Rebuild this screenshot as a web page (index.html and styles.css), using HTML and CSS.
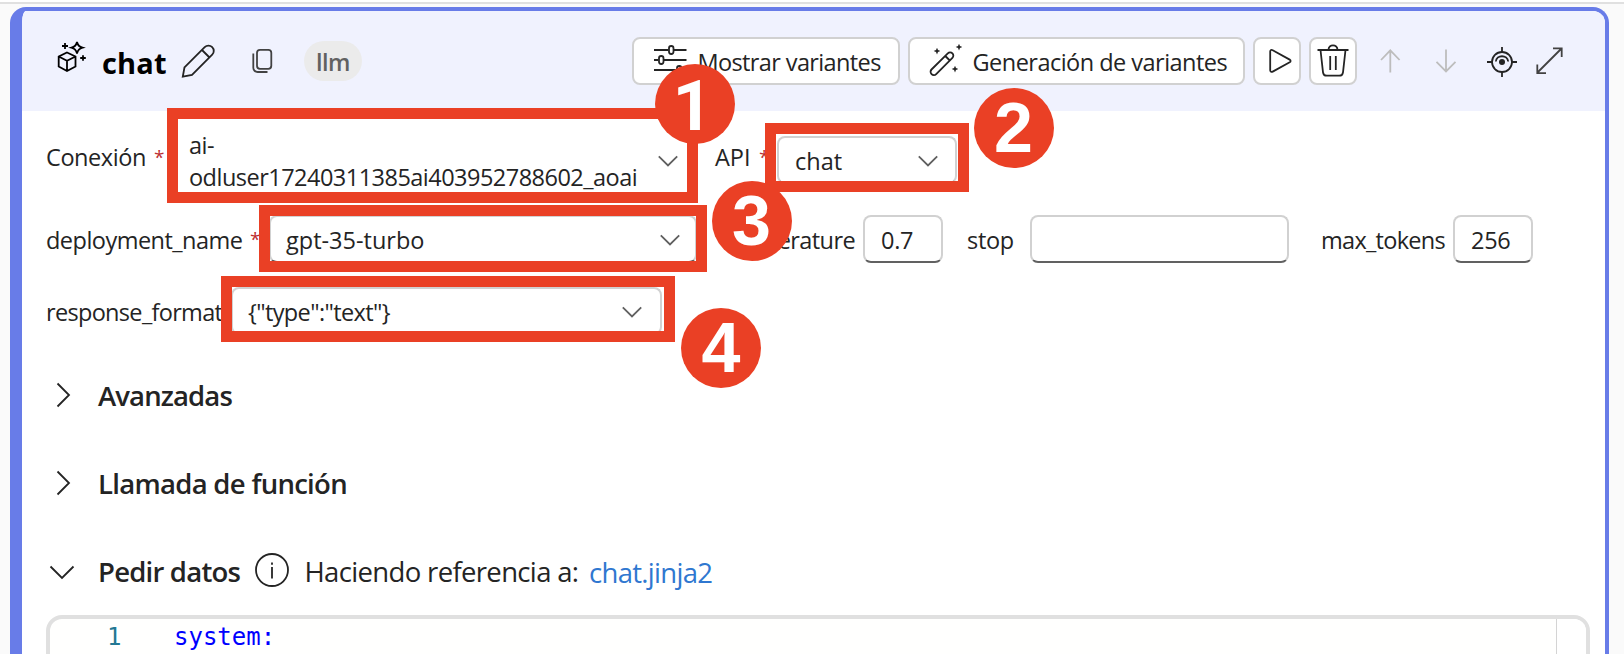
FILE: index.html
```html
<!DOCTYPE html>
<html lang="es">
<head>
<meta charset="utf-8">
<title>chat</title>
<link rel="stylesheet" href="styles.css">
</head>
<body>
<main class="card">
  <header class="head">
    <svg class="ic cube" width="32" height="34" viewBox="56 40 32 34"><path d="M67 52.500l8.500 4v10l-8.500 4.500-8.300-4.500v-10zM58.700 56.500l8.300 4.200 8.500-4.200M67 60.700V71"/><path d="M77 42c.8 3.500 2 4.800 5.500 5.700-3.500 1-4.700 2.300-5.500 5.800-.8-3.500-2-4.800-5.500-5.800 3.500-.9 4.700-2.200 5.500-5.700z"/><path d="M65 43v6M62 46h6M83 55.200v5.600M80.200 58h5.600"/></svg>
    <h1 class="name">chat</h1>
    <svg class="ic pencil" width="36" height="36" viewBox="180 43 36 36"><path d="M184.500 67.300L204.700 47.200a5.300 5.300 0 0 1 7.500 7.500L192 74.800 182.800 76.600zM202 50l7.500 7.500"/></svg>
    <svg class="ic copy" width="24" height="28" viewBox="250 47 24 28"><rect x="257" y="49.800" width="14.300" height="19" rx="3"/><path d="M253.300 53.500v14.200a4.300 4.300 0 0 0 4.300 4.300h9.900"/></svg>
    <span class="pill">llm</span>
    <div class="tools">
      <button class="btn show"><svg class="ic" width="34" height="34" viewBox="653 44 34 34"><path d="M654 50h14.500M674 50h12.500M654 60h4.500M664 60h22.500M654 70h22.500M682 70h4.500"/><rect x="669" y="46" width="4.500" height="8" rx="2.200"/><rect x="659" y="56" width="4.500" height="8" rx="2.200"/><rect x="677" y="66" width="4.500" height="8" rx="2.200"/></svg><span class="txt">Mostrar variantes</span></button>
      <button class="btn gen"><svg class="ic" width="36" height="36" viewBox="928 44 36 36"><path d="M931.500 70.500L947.800 54.300a3.100 3.100 0 0 1 4.600 4.600L936.200 75.100a3.200 3.200 0 0 1-4.700-4.600zM945.300 57l4.500 4.500"/><path class="star" d="M937 48.700l1 2.300 2.400 1-2.400 1-1 2.400-1-2.400-2.400-1 2.400-1zM959 44.700l1 2.300 2.400 1-2.400 1-1 2.400-1-2.400-2.400-1 2.400-1zM955 66.800l1 2.200 2.400 1-2.400 1-1 2.400-1-2.400-2.400-1 2.400-1z"/></svg><span class="txt">Generación de variantes</span></button>
      <button class="btn sq"><svg class="ic" width="44" height="44" viewBox="1255.500 39 44 44"><path d="M1270.700 51.500c0-1.500 1.200-2 2.500-1.300l17 9.400c1.200.7 1.200 1.900 0 2.600l-17 9.400c-1.300.7-2.500.1-2.500-1.300z"/></svg></button>
      <button class="btn sq"><svg class="ic" width="44" height="44" viewBox="1311.500 39 44 44"><path d="M1318 50h31M1329 50c0-6.300 9-6.300 9 0M1321 50l2.500 22.300c.3 2.200 1.600 3.400 3.700 3.400h12.600c2.100 0 3.400-1.200 3.700-3.400L1346 50M1330.700 56v14M1336.300 56v14"/></svg></button>
      <svg class="ic dim up" width="32" height="32" viewBox="1373 45 32 32"><path d="M1389.300 72.500V50M1380 60l9.300-9.700 9.300 9.700"/></svg>
      <svg class="ic dim down" width="32" height="32" viewBox="1429 45 32 32"><path d="M1445 49.500V72M1435.500 61.800l9.500 9.700 9.500-9.700"/></svg>
      <svg class="ic target" width="32" height="32" viewBox="1485 45 32 32"><circle cx="1501" cy="62" r="10"/><circle cx="1501" cy="62" r="3" class="dot"/><path d="M1501 47v5.500M1501 71.500V77M1486 62h5.500M1510.500 62h5.500M1494.800 61.500c.8-7 11.600-7 12.400 0"/></svg>
      <svg class="ic expand" width="32" height="32" viewBox="1533 45 32 32"><path d="M1536.500 72.500l24-24M1552 48.300h8.700v8.700M1536.300 64.500v8.700h8.700"/></svg>
    </div>
  </header>

  <section class="row r1">
    <label class="lbl connection">Conexión</label><span class="req">*</span>
    <div class="select conn"><span class="two">ai-<br>odluser17240311385ai403952788602_aoai</span><svg class="ic chev" width="20" height="12" viewBox="0 0 20 12"><path d="M.8 1.300l9.200 9.200 9.200-9.200"/></svg></div>
    <label class="lbl api">API</label><span class="req short">*</span>
    <div class="select kind"><span>chat</span><svg class="ic chev" width="20" height="12" viewBox="0 0 20 12"><path d="M.8 1.300l9.200 9.200 9.200-9.200"/></svg></div>
  </section>

  <section class="row r2">
    <label class="lbl deployment">deployment_name</label><span class="req">*</span>
    <div class="select model"><span>gpt-35-turbo</span><svg class="ic chev" width="20" height="12" viewBox="0 0 20 12"><path d="M.8 1.300l9.200 9.200 9.200-9.200"/></svg></div>
    <label class="lbl temp">temperature</label>
    <div class="input num">0.7</div>
    <label class="lbl stop">stop</label>
    <div class="input wide"></div>
    <label class="lbl max">max_tokens</label>
    <div class="input num">256</div>
  </section>

  <section class="row r3">
    <label class="lbl response">response_format</label>
    <div class="select format"><span class="txt">{"type":"text"}</span><svg class="ic chev" width="20" height="12" viewBox="0 0 20 12"><path d="M.8 1.300l9.200 9.200 9.200-9.200"/></svg></div>
  </section>

  <section class="fold first"><svg class="ic" width="26" height="26" viewBox="0 0 26 26"><path d="M8.500 1.500L20 13 8.500 24.500"/></svg><h2>Avanzadas</h2></section>
  <section class="fold"><svg class="ic" width="26" height="26" viewBox="0 0 26 26"><path d="M8.500 1.500L20 13 8.500 24.500"/></svg><h2>Llamada de función</h2></section>
  <section class="fold"><svg class="ic" width="26" height="26" viewBox="0 0 26 26"><path d="M1.500 8.500L13 20 24.500 8.500"/></svg><h2 class="ask">Pedir datos</h2>
    <svg class="ic info" width="36" height="36" viewBox="0 0 36 36"><circle cx="18" cy="17" r="16"/><path d="M18 14v11.500M18 9.500v2.300"/></svg>
    <span class="refers">Haciendo referencia a:</span><a class="link">chat.jinja2</a></section>

  <section class="editor"><span class="ln">1</span><code>system:</code><span class="ruler"></span></section>
</main>

<div class="mark m1"></div><div class="mark m2"></div><div class="mark m3"></div><div class="mark m4"></div>
<div class="badge b1">1</div><div class="badge b2">2</div><div class="badge b3">3</div><div class="badge b4">4</div>
</body>
</html>
```

FILE: styles.css
```css
* { box-sizing: border-box; }
html { overflow: hidden; }
body { margin: 0; width: 1624px; height: 654px; overflow: hidden; position: relative; background: linear-gradient(#fff 0 2px, #e0e0e0 2px 4px, #fafafa 4px); font: 23.5px "Open Sans", "Noto Sans", sans-serif; color: #242424; white-space: nowrap; padding-top: 7px; }
.card { width: 1599px; height: 647px; margin-left: 10px; border: 4px solid #687ce8; border-left-width: 12px; border-bottom: 0; border-radius: 16px 16px 0 0; background: #fff; overflow: hidden; }
.ic { fill: none; stroke: #242424; stroke-width: 1.8; flex: none; display: block; }
.ic .star, .ic .dot { fill: #242424; stroke: none; }
.txt { letter-spacing: -.62px; }

.head { height: 100px; background: #f0f2fe; display: flex; align-items: center; padding: 0 39.5px 0 34px; }
.cube { stroke: #000; margin-top: -8px; }
.name { margin: 3px 0 0 14px; width: 64px; font-size: 29px; font-weight: 700; color: #000; letter-spacing: .2px; }
.pencil { margin-left: 14px; }
.copy { margin-left: 34px; stroke: #424242; }
.pill { margin-left: 30px; width: 58px; height: 40px; border-radius: 20px; background: #ebebeb; color: #616161; font-weight: 600; line-height: 42px; text-align: center; letter-spacing: -.5px; }
.tools { margin-left: auto; display: flex; align-items: center; }
.btn { height: 48px; border: 2px solid #d1d1d1; border-radius: 8px; background: #fff; padding: 0; font: inherit; color: inherit; display: flex; align-items: center; margin-right: 8px; }
.btn > span { margin-top: 2px; }
.show { width: 268px; padding-left: 19px; }
.show > span { margin-left: 11px; }
.gen { width: 337.5px; padding-left: 18px; }
.gen > span { margin-left: 9px; letter-spacing: -.52px; }
.sq { width: 48px; }
.dim { stroke: #bdbdbd; }
.up { margin-left: 8.5px; }
.down, .target { margin-left: 24px; }
.expand { margin-left: 16px; stroke: #424242; }

.row { display: flex; align-items: center; padding-left: 24px; }
.r1 { height: 92px; }
.r2, .r3 { height: 72px; }
.lbl { flex: none; letter-spacing: -.6px; }
.r2 .lbl, .r3 .lbl { padding-top: 2px; }
.connection { width: 107px; letter-spacing: -.42px; }
.api { margin-left: 26px; width: 43px; letter-spacing: 0; }
.deployment { width: 203px; letter-spacing: -.52px; }
.temp { margin-left: 24px; width: 142px; padding-right: 8px; text-align: right; }
.stop { margin-left: 24px; width: 62.5px; letter-spacing: -.3px; }
.max { margin-left: 32px; width: 132px; letter-spacing: -.7px; }
.response { width: 185px; letter-spacing: -.68px; }
.req { color: #bc2f32; flex: none; width: 20px; font-size: 19px; padding: 0 0 1px 1px; }
.short { width: 19px; }

.select, .input { flex: none; height: 48px; border: 2px solid #d1d1d1; border-bottom-color: #616161; border-radius: 8px; background: #fff; display: flex; align-items: center; padding: 2px 0 0 15px; }
.chev { stroke: #616161; margin-left: auto; }
.two { line-height: 32px; letter-spacing: -.52px; }
.conn { width: 516px; height: 84px; padding: 7px 9.5px 0 14px; }
.kind { width: 180px; padding: 2px 17px 0 16px; margin-top: 5px; }
.model { width: 428px; padding: 2px 15px 0 15px; }
.format { width: 431px; padding-right: 18px; }
.num { width: 80px; padding-left: 16px; letter-spacing: -.3px; }
.wide { width: 259.5px; }

.fold { height: 88px; display: flex; align-items: center; padding-left: 27px; font-size: 27.5px; letter-spacing: -.7px; }
.first { margin-top: 4px; }
.fold h2 { margin: 0 0 0 23px; font-size: 27.5px; font-weight: 600; }
.first h2 { letter-spacing: -.88px; }
.fold .ask { width: 155.5px; letter-spacing: -.78px; }
.refers { margin-left: 15px; width: 284.5px; letter-spacing: -.66px; }
.link { color: #2f77d0; padding-top: 3px; }

.editor { height: 80px; margin: 0 15px 0 24px; border: 4px solid #e0e0e0; border-radius: 16px; background: #fffffe; display: flex; font: 24px/36px "DejaVu Sans Mono", monospace; overflow: hidden; }
.ln { color: #237893; margin-left: 57px; width: 67px; }
code { font: inherit; color: #00f; }
.ruler { margin-left: auto; width: 30px; border-left: 1px solid #d4d4d4; background: #fff; }

/* Numbered callouts laid over the form */
.mark { position: absolute; border: 11.5px solid #ea4025; }
.m1 { left: 167px; top: 108px; width: 531px; height: 95px; }
.m2 { left: 765px; top: 122.5px; width: 203.5px; height: 69.5px; }
.m3 { left: 259px; top: 205px; width: 448px; height: 67px; }
.m4 { left: 221px; top: 275.5px; width: 454px; height: 66.5px; }
.badge { position: absolute; width: 80px; height: 80px; border-radius: 50%; background: #ea4025; color: #fff; font: bold 70px/80px "Liberation Sans", sans-serif; text-align: center; }
.b1 { left: 655px; top: 64px; font-family: Roboto, sans-serif; line-height: 84px; padding-right: 5px; }
.b2 { left: 973.5px; top: 88px; }
.b3 { left: 711.5px; top: 181px; }
.b4 { left: 681px; top: 307.5px; }
```
